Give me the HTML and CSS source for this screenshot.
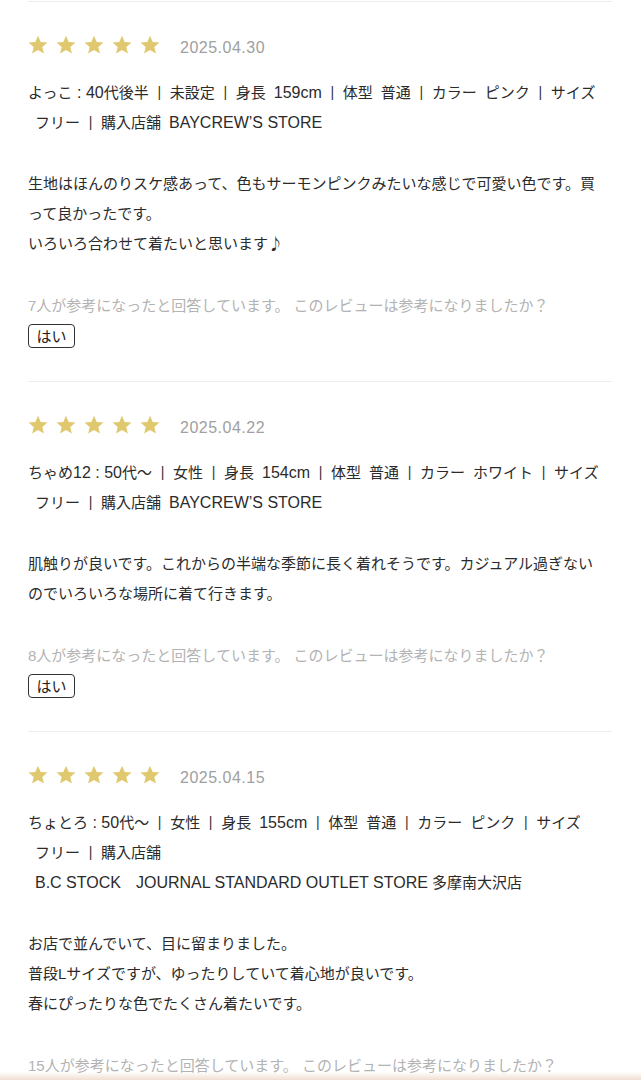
FILE: index.html
```html
<!DOCTYPE html>
<html lang="ja">
<head>
<meta charset="utf-8">
<title>レビュー</title>
<link rel="stylesheet" href="styles.css">
</head>
<body>
<div class="reviews">

  <section class="review">
    <div class="rating">
      <div class="stars">
        <svg class="star" viewBox="0 0 20 20"><polygon points="10,0.8 12.7,7 19.5,7.5 14.3,11.9 15.9,18.6 10,15 4.1,18.6 5.7,11.9 0.5,7.5 7.3,7"/></svg>
        <svg class="star" viewBox="0 0 20 20"><polygon points="10,0.8 12.7,7 19.5,7.5 14.3,11.9 15.9,18.6 10,15 4.1,18.6 5.7,11.9 0.5,7.5 7.3,7"/></svg>
        <svg class="star" viewBox="0 0 20 20"><polygon points="10,0.8 12.7,7 19.5,7.5 14.3,11.9 15.9,18.6 10,15 4.1,18.6 5.7,11.9 0.5,7.5 7.3,7"/></svg>
        <svg class="star" viewBox="0 0 20 20"><polygon points="10,0.8 12.7,7 19.5,7.5 14.3,11.9 15.9,18.6 10,15 4.1,18.6 5.7,11.9 0.5,7.5 7.3,7"/></svg>
        <svg class="star" viewBox="0 0 20 20"><polygon points="10,0.8 12.7,7 19.5,7.5 14.3,11.9 15.9,18.6 10,15 4.1,18.6 5.7,11.9 0.5,7.5 7.3,7"/></svg>
      </div>
      <span class="date">2025.04.30</span>
    </div>
    <p class="meta">よっこ<span class="en"> : 40</span>代後半<span class="sep">|</span>未設定<span class="sep">|</span>身長<span class="gap"></span><span class="en">159cm</span><span class="sep">|</span>体型<span class="gap"></span>普通<span class="sep">|</span>カラー<span class="gap"></span>ピンク<span class="sep">|</span>サイズ<br><span class="indent">フリー</span><span class="sep">|</span>購入店舗<span class="gap"></span><span class="en">BAYCREW’S STORE</span></p>
    <p class="body">生地はほんのりスケ感あって、色もサーモンピンクみたいな感じで可愛い色です。買って良かったです。<br>いろいろ合わせて着たいと思います<span class="jp">♪</span></p>
    <p class="helpful">7人が参考になったと回答しています。 このレビューは参考になりましたか？</p>
    <button class="yes" type="button">はい</button>
  </section>

  <section class="review">
    <div class="rating">
      <div class="stars">
        <svg class="star" viewBox="0 0 20 20"><polygon points="10,0.8 12.7,7 19.5,7.5 14.3,11.9 15.9,18.6 10,15 4.1,18.6 5.7,11.9 0.5,7.5 7.3,7"/></svg>
        <svg class="star" viewBox="0 0 20 20"><polygon points="10,0.8 12.7,7 19.5,7.5 14.3,11.9 15.9,18.6 10,15 4.1,18.6 5.7,11.9 0.5,7.5 7.3,7"/></svg>
        <svg class="star" viewBox="0 0 20 20"><polygon points="10,0.8 12.7,7 19.5,7.5 14.3,11.9 15.9,18.6 10,15 4.1,18.6 5.7,11.9 0.5,7.5 7.3,7"/></svg>
        <svg class="star" viewBox="0 0 20 20"><polygon points="10,0.8 12.7,7 19.5,7.5 14.3,11.9 15.9,18.6 10,15 4.1,18.6 5.7,11.9 0.5,7.5 7.3,7"/></svg>
        <svg class="star" viewBox="0 0 20 20"><polygon points="10,0.8 12.7,7 19.5,7.5 14.3,11.9 15.9,18.6 10,15 4.1,18.6 5.7,11.9 0.5,7.5 7.3,7"/></svg>
      </div>
      <span class="date">2025.04.22</span>
    </div>
    <p class="meta">ちゃめ<span class="en">12 : 50</span>代〜<span class="sep">|</span>女性<span class="sep">|</span>身長<span class="gap"></span><span class="en">154cm</span><span class="sep">|</span>体型<span class="gap"></span>普通<span class="sep">|</span>カラー<span class="gap"></span>ホワイト<span class="sep">|</span>サイズ<br><span class="indent">フリー</span><span class="sep">|</span>購入店舗<span class="gap"></span><span class="en">BAYCREW’S STORE</span></p>
    <p class="body">肌触りが良いです。これからの半端な季節に長く着れそうです。カジュアル過ぎないのでいろいろな場所に着て行きます。</p>
    <p class="helpful">8人が参考になったと回答しています。 このレビューは参考になりましたか？</p>
    <button class="yes" type="button">はい</button>
  </section>

  <section class="review">
    <div class="rating">
      <div class="stars">
        <svg class="star" viewBox="0 0 20 20"><polygon points="10,0.8 12.7,7 19.5,7.5 14.3,11.9 15.9,18.6 10,15 4.1,18.6 5.7,11.9 0.5,7.5 7.3,7"/></svg>
        <svg class="star" viewBox="0 0 20 20"><polygon points="10,0.8 12.7,7 19.5,7.5 14.3,11.9 15.9,18.6 10,15 4.1,18.6 5.7,11.9 0.5,7.5 7.3,7"/></svg>
        <svg class="star" viewBox="0 0 20 20"><polygon points="10,0.8 12.7,7 19.5,7.5 14.3,11.9 15.9,18.6 10,15 4.1,18.6 5.7,11.9 0.5,7.5 7.3,7"/></svg>
        <svg class="star" viewBox="0 0 20 20"><polygon points="10,0.8 12.7,7 19.5,7.5 14.3,11.9 15.9,18.6 10,15 4.1,18.6 5.7,11.9 0.5,7.5 7.3,7"/></svg>
        <svg class="star" viewBox="0 0 20 20"><polygon points="10,0.8 12.7,7 19.5,7.5 14.3,11.9 15.9,18.6 10,15 4.1,18.6 5.7,11.9 0.5,7.5 7.3,7"/></svg>
      </div>
      <span class="date">2025.04.15</span>
    </div>
    <p class="meta">ちょとろ<span class="en"> : 50</span>代〜<span class="sep">|</span>女性<span class="sep">|</span>身長<span class="gap"></span><span class="en">155cm</span><span class="sep">|</span>体型<span class="gap"></span>普通<span class="sep">|</span>カラー<span class="gap"></span>ピンク<span class="sep">|</span>サイズ<br><span class="indent">フリー</span><span class="sep">|</span>購入店舗<br><span class="indent"><span class="en">B.C STOCK</span>　<span class="en">JOURNAL STANDARD OUTLET STORE</span> 多摩南大沢店</span></p>
    <p class="body">お店で並んでいて、目に留まりました。<br>普段Lサイズですが、ゆったりしていて着心地が良いです。<br>春にぴったりな色でたくさん着たいです。</p>
    <p class="helpful">15人が参考になったと回答しています。 このレビューは参考になりましたか？</p>
    <button class="yes" type="button">はい</button>
  </section>

</div>
<div class="bottom-shade"></div>
</body>
</html>
```

FILE: styles.css
```css
html, body {
  margin: 0;
  padding: 0;
  background: #ffffff;
}

body {
  font-family: "Liberation Sans", "Noto Sans CJK JP", sans-serif;
  color: #2b2b2b;
  font-size: 15px;
}

.reviews {
  padding: 0 29px 0 28px;
}

.review {
  border-top: 1px solid #ededed;
  padding: 33px 0 33px;
}

.review:first-child {
  margin-top: 1px;
}

.rating {
  display: flex;
  align-items: center;
  height: 20px;
  gap: 20px;
}

.stars {
  display: flex;
  gap: 8px;
}

.star {
  width: 20px;
  height: 20px;
  display: block;
  fill: #e0c86f;
}

.date {
  color: #a0a0a0;
  font-size: 16px;
  letter-spacing: 0.5px;
  position: relative;
  top: 3px;
}

.meta {
  margin: 23px 0 0;
  line-height: 30px;
  width: 584px;
}

.en {
  font-size: 16px;
}

.jp {
  font-family: "Noto Sans CJK JP", sans-serif;
  line-height: 1;
}

.sep {
  display: inline-block;
  width: 21px;
  text-align: center;
  font-size: 14px;
  position: relative;
  top: -1px;
  color: #333333;
}

.gap {
  display: inline-block;
  width: 8px;
}

.indent {
  padding-left: 7px;
}

.body {
  margin: 31px 0 0;
  line-height: 30px;
  width: 580px;
}

.helpful {
  margin: 32px 0 0;
  line-height: 30px;
  color: #b3b3b3;
}

.yes {
  display: block;
  margin-top: 3px;
  height: 24px;
  width: 47px;
  padding: 0;
  background: #ffffff;
  border: 1.5px solid #333333;
  border-radius: 4px;
  font-family: "Noto Sans CJK JP", "Noto Sans", sans-serif;
  font-size: 15px;
  line-height: 20px;
  color: #222222;
}

.bottom-shade {
  position: fixed;
  left: 0;
  right: 0;
  bottom: 0;
  height: 8px;
  background: linear-gradient(to bottom, rgba(236, 214, 198, 0), rgba(232, 208, 190, 0.7));
}
```
